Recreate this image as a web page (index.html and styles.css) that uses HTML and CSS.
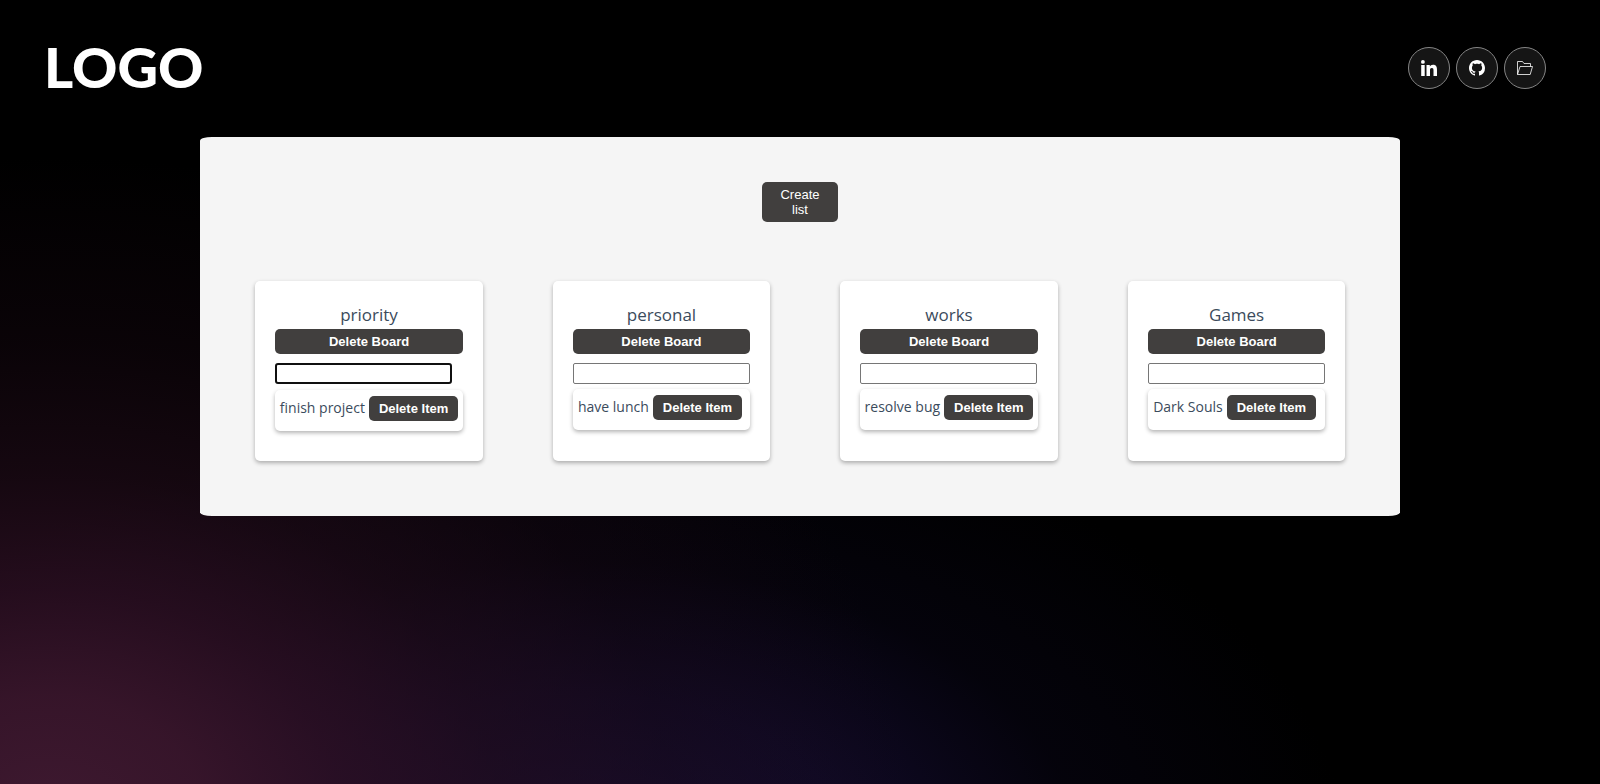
FILE: index.html
```html
<!DOCTYPE html>
<html lang="en">
<head>
  <meta charset="utf-8">
  <meta name="viewport" content="width=device-width, initial-scale=1">
  <title>Boards</title>
  <link rel="stylesheet" href="styles.css">
</head>
<body>
  <header class="header">
    <a class="logo" href="#">LOGO</a>
    <nav class="social" aria-label="Links">
      <a class="social-link" href="#" aria-label="LinkedIn">
        <svg class="icon" viewBox="0 0 16 16" fill="currentColor" aria-hidden="true"><circle cx="1.9" cy="1.9" r="1.9"/><path d="M.2 5.100h3.500V16H.2zM5.500 5.100h3.300v1.500c.5-.9 1.600-1.800 3.200-1.800C15.300 4.800 16 7 16 9.900V16h-3.500v-5.300c0-1.300 0-2.700-1.700-2.700S9 9.200 9 10.600V16H5.500z"/></svg>
      </a>
      <a class="social-link" href="#" aria-label="GitHub">
        <svg class="icon" viewBox="0 0 16 16" fill="currentColor" aria-hidden="true"><path d="M8 0C3.580 0 0 3.580 0 8c0 3.540 2.290 6.530 5.470 7.590.4.070.55-.17.55-.38 0-.19-.01-.82-.01-1.490-2.010.37-2.530-.49-2.690-.94-.09-.23-.48-.94-.82-1.130-.28-.15-.68-.52-.01-.53.63-.01 1.080.58 1.230.82.72 1.210 1.870.87 2.330.66.07-.52.28-.87.51-1.070-1.780-.2-3.640-.89-3.640-3.950 0-.87.31-1.590.82-2.150-.08-.2-.36-1.020.08-2.120 0 0 .67-.21 2.200.82.64-.18 1.320-.27 2-.27s1.360.09 2 .27c1.530-1.040 2.200-.82 2.200-.82.44 1.100.16 1.920.08 2.120.51.56.82 1.270.82 2.150 0 3.070-1.870 3.750-3.650 3.950.29.25.54.73.54 1.480 0 1.070-.01 1.930-.01 2.200 0 .21.15.46.55.38A8.010 8.010 0 0 0 16 8c0-4.420-3.580-8-8-8z"/></svg>
      </a>
      <a class="social-link" href="#" aria-label="Projects">
        <svg class="icon" viewBox="0 0 16 16" fill="none" stroke="currentColor" stroke-width="0.8" stroke-linejoin="round" aria-hidden="true"><path d="M.5 14.500V1.500h5l1.500 2h6.500v3M.5 14.500h12.700l2.300-8H3z"/></svg>
      </a>
    </nav>
  </header>

  <main class="panel">
    <button class="btn btn-create" type="button">Create list</button>
    <div class="boards">
      <section class="board">
        <h2 class="board-title">priority</h2>
        <button class="btn" type="button">Delete Board</button>
        <input class="board-input board-input-active" type="text" aria-label="New item for priority">
        <div class="item"><span class="item-text">finish project</span><button class="btn" type="button">Delete Item</button></div>
      </section>
      <section class="board">
        <h2 class="board-title">personal</h2>
        <button class="btn" type="button">Delete Board</button>
        <input class="board-input" type="text" aria-label="New item for personal">
        <div class="item"><span class="item-text">have lunch</span><button class="btn" type="button">Delete Item</button></div>
      </section>
      <section class="board">
        <h2 class="board-title">works</h2>
        <button class="btn" type="button">Delete Board</button>
        <input class="board-input" type="text" aria-label="New item for works">
        <div class="item"><span class="item-text">resolve bug</span><button class="btn" type="button">Delete Item</button></div>
      </section>
      <section class="board">
        <h2 class="board-title">Games</h2>
        <button class="btn" type="button">Delete Board</button>
        <input class="board-input" type="text" aria-label="New item for Games">
        <div class="item"><span class="item-text">Dark Souls</span><button class="btn" type="button">Delete Item</button></div>
      </section>
    </div>
  </main>
</body>
</html>
```
FILE: styles.css
```css
* {
  box-sizing: border-box;
}

body {
  margin: 0;
  min-height: 100vh;
  color: #3b4b5c;
  font-family: "Segoe UI", "Open Sans", sans-serif;
  background:
    radial-gradient(ellipse 54% 84% at 3% 104%, #3e1930 0%, rgba(58, 22, 44, 0.92) 18%, rgba(46, 16, 36, 0.8) 34%, rgba(34, 12, 26, 0.62) 52%, rgba(24, 8, 18, 0.4) 72%, transparent 100%),
    radial-gradient(ellipse 48% 56% at 36% 108%, #1a1038 0%, #100a26 35%, rgba(6, 4, 16, 0.7) 65%, transparent 100%),
    #000;
}

.header {
  display: flex;
  align-items: center;
  justify-content: space-between;
  padding: 39px 54px 42px 44px;
}

.logo {
  color: #fff;
  font-family: Lato, sans-serif;
  font-size: 56px;
  font-weight: 900;
  line-height: 56px;
  text-decoration: none;
}

.social {
  display: flex;
  gap: 6px;
  padding-top: 2px;
}

.social-link {
  display: grid;
  place-items: center;
  width: 42px;
  height: 42px;
  border: 1px solid #858585;
  border-radius: 50%;
  background: #151515;
  color: #fff;
}

.icon {
  width: 16px;
  height: 16px;
}

.panel {
  display: flex;
  flex-direction: column;
  align-items: center;
  gap: 59px;
  width: 75%;
  margin: 0 auto;
  padding: 45px 20px 55px;
  border-radius: 1%;
  background: #f5f5f5;
}

.btn {
  padding: 5px 10px;
  border: 0;
  border-radius: 5px;
  background: #413f3e;
  color: #fff;
  font-family: Arial, "Liberation Sans", sans-serif;
  font-size: 13px;
  font-weight: 700;
  line-height: 15px;
  white-space: nowrap;
  cursor: pointer;
}

.btn-create {
  width: 76px;
  font-weight: 400;
  white-space: normal;
}

.boards {
  display: flex;
  justify-content: space-around;
  width: 100%;
}

.board {
  display: flex;
  flex-direction: column;
  padding: 20px 20px 30px;
  border-radius: 5px;
  background: #fff;
  box-shadow: 0 2px 4px rgba(0, 0, 0, 0.3);
}

.board-title {
  margin: 0;
  font-size: 17px;
  font-weight: 400;
  line-height: 28px;
  text-align: center;
}

.board-input {
  width: 177px;
  height: 21px;
  margin: 9px 0 5px;
  border: 1px solid #767676;
  border-radius: 2px;
  background: #fff;
}

.board-input-active {
  margin-bottom: 6px;
  border: 2px solid #101010;
  border-radius: 3px;
}

.item {
  display: flex;
  align-items: flex-start;
  gap: 4px;
  padding: 6px 5px 10px;
  border-radius: 5px;
  background: #fff;
  box-shadow: 0 2px 4px rgba(0, 0, 0, 0.3);
}

.item-text {
  font-size: 14px;
  line-height: 23px;
  white-space: nowrap;
}
```
